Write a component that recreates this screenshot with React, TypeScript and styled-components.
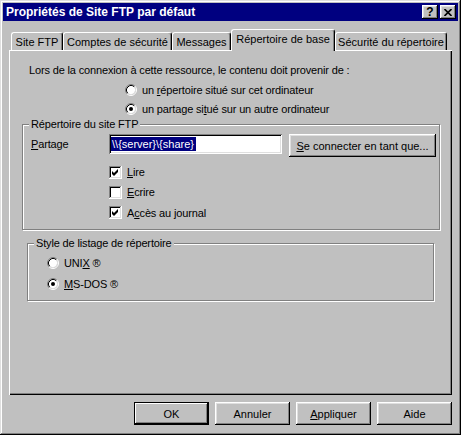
import React from 'react';
import styled, { createGlobalStyle } from 'styled-components';

const GlobalStyle = createGlobalStyle`
  html, body { margin: 0; padding: 0; background: #c0c0c0; }
  body {
    font-family: "Liberation Sans", Arial, sans-serif;
    font-size: 11px;
    color: #000;
  }
  * { box-sizing: border-box; }
`;

const Window = styled.div`
  width: 461px;
  height: 435px;
  padding: 3px;
  background: #c0c0c0;
  display: flex;
  flex-direction: column;
  box-shadow: inset -1px -1px #000, inset 1px 1px #dfdfdf,
    inset -2px -2px #808080, inset 2px 2px #fff;
`;

const TitleBar = styled.div`
  height: 18px;
  background: #000080;
  color: #fff;
  font-weight: bold;
  font-size: 12px;
  display: flex;
  align-items: center;
  justify-content: space-between;
  padding: 0 2px 0 3px;
`;

const TitleButtons = styled.div`
  display: flex;
  gap: 2px;
`;

const TitleButton = styled.div`
  width: 16px;
  height: 14px;
  background: #c0c0c0;
  color: #000;
  font-size: 12px;
  font-weight: bold;
  display: flex;
  align-items: center;
  justify-content: center;
  box-shadow: inset -1px -1px #000, inset 1px 1px #fff,
    inset -2px -2px #808080, inset 2px 2px #dfdfdf;
`;

const Body = styled.div`
  padding: 0 6px;
  display: flex;
  flex-direction: column;
`;

const TabStrip = styled.div`
  display: flex;
  align-items: flex-end;
  height: 21px;
  margin: 8px 0 0 2px;
  position: relative;
  z-index: 1;
`;

const Tab = styled.div<{ $active?: boolean; $w: number }>`
  width: ${(p) => p.$w}px;
  height: ${(p) => (p.$active ? 22 : 18)}px;
  margin-bottom: ${(p) => (p.$active ? -1 : 0)}px;
  padding-bottom: ${(p) => (p.$active ? 3 : 0)}px;
  border: 1px solid #fff;
  border-bottom: none;
  border-right-color: #000;
  border-radius: 3px 3px 0 0;
  box-shadow: inset -1px 0 #808080;
  background: #c0c0c0;
  display: flex;
  align-items: center;
  justify-content: center;
  white-space: nowrap;
`;

const Panel = styled.div`
  height: 345px;
  padding-top: 14px;
  display: flex;
  flex-direction: column;
  letter-spacing: -0.15px;
  box-shadow: inset 1px 1px #fff, inset -1px -1px #000, inset -2px -2px #808080;
`;

const Intro = styled.div`
  padding-left: 20px;
  line-height: 13px;
`;

const OptionList = styled.div<{ $indent: number; $top?: number }>`
  display: flex;
  flex-direction: column;
  margin-left: ${(p) => p.$indent}px;
  margin-top: ${(p) => p.$top ?? 0}px;
`;

const OptionRow = styled.label<{ $h: number }>`
  display: flex;
  align-items: center;
  gap: 5px;
  height: ${(p) => p.$h}px;
  white-space: nowrap;
`;

const Mn = styled.span`
  text-decoration: underline;
`;

const Group = styled.fieldset<{ $left: number; $right: number; $top: number; $bottom: number }>`
  margin: ${(p) => p.$top}px ${(p) => p.$right}px 0 ${(p) => p.$left}px;
  padding: 3px 0 ${(p) => p.$bottom}px 8px;
  border: 1px solid #808080;
  box-shadow: inset 1px 1px #fff, 1px 1px #fff;
  min-inline-size: auto;
`;

const Legend = styled.legend`
  padding: 0 2px;
  margin-left: -2px;
  line-height: 13px;
  background: #c0c0c0;
`;

const FieldRow = styled.div`
  display: flex;
  align-items: flex-start;
  height: 23px;
`;

const FieldLabel = styled.span`
  width: 78px;
  line-height: 20px;
`;

const TextField = styled.div`
  width: 173px;
  height: 20px;
  background: #fff;
  padding: 3px 3px 0 2px;
  line-height: 14px;
  box-shadow: inset 1px 1px #808080, inset -1px -1px #fff,
    inset 2px 2px #000, inset -2px -2px #dfdfdf;
  margin-right: 7px;
`;

const Selected = styled.span`
  background: #000080;
  color: #fff;
  display: inline-block;
  padding: 0 2px 0 1px;
  letter-spacing: 0;
`;

const Button = styled.button<{ $default?: boolean; $w?: number }>`
  width: ${(p) => p.$w ?? 75}px;
  height: 23px;
  padding: 0;
  border: none;
  background: #c0c0c0;
  font: inherit;
  color: #000;
  box-shadow: ${(p) =>
    p.$default
      ? 'inset 0 0 0 1px #000, inset -2px -2px #000, inset 2px 2px #fff, inset -3px -3px #808080'
      : 'inset -1px -1px #000, inset 1px 1px #fff, inset -2px -2px #808080, inset 2px 2px #dfdfdf'};
`;

const Footer = styled.div`
  display: flex;
  justify-content: flex-end;
  gap: 6px;
  margin-top: 7px;
`;

const Radio = ({ checked }: { checked?: boolean }) => (
  <svg width="12" height="12" viewBox="0 0 12 12">
    <circle cx="6" cy="6" r="4.2" fill="#fff" />
    <path d="M2.11 9.89A5.5 5.5 0 0 1 9.89 2.11" stroke="#808080" fill="none" />
    <path d="M9.89 2.11A5.5 5.5 0 0 1 2.11 9.89" stroke="#fff" fill="none" />
    <path d="M2.82 9.18A4.5 4.5 0 0 1 9.18 2.82" stroke="#000" fill="none" />
    <path d="M9.18 2.82A4.5 4.5 0 0 1 2.82 9.18" stroke="#dfdfdf" fill="none" />
    {checked && <circle cx="6" cy="6" r="2" fill="#000" />}
  </svg>
);

const Check = ({ checked }: { checked?: boolean }) => (
  <svg width="13" height="13" viewBox="0 0 13 13" shapeRendering="crispEdges">
    <rect x="0" y="0" width="13" height="13" fill="#fff" />
    <path d="M0.5 12.5V0.5H12.5" stroke="#808080" fill="none" />
    <path d="M1.5 11.5V1.5H11.5" stroke="#000" fill="none" />
    <path d="M0 12.5H12.5V0" stroke="#fff" fill="none" />
    <path d="M1 11.5H11.5V1" stroke="#dfdfdf" fill="none" />
    {checked && <path d="M3 5l2 2 4-4v3l-4 4-2-2z" fill="#000" shapeRendering="auto" />}
  </svg>
);

const tabs = [
  { label: 'Site FTP', w: 52 },
  { label: 'Comptes de sécurité', w: 109 },
  { label: 'Messages', w: 59 },
  { label: 'Répertoire de base', w: 104, active: true },
  { label: 'Sécurité du répertoire', w: 112 },
];

export default function App() {
  return (
    <>
      <GlobalStyle />
      <Window>
        <TitleBar>
          <span>Propriétés de Site FTP par défaut</span>
          <TitleButtons>
            <TitleButton>?</TitleButton>
            <TitleButton>
              <svg width="8" height="7" viewBox="0 0 8 7">
                <path d="M0.5 0l7 7M7.5 0l-7 7" stroke="#000" strokeWidth="1.6" />
              </svg>
            </TitleButton>
          </TitleButtons>
        </TitleBar>
        <Body>
          <TabStrip>
            {tabs.map((t) => (
              <Tab key={t.label} $w={t.w} $active={t.active}>
                {t.label}
              </Tab>
            ))}
          </TabStrip>
          <Panel>
            <Intro>Lors de la connexion à cette ressource, le contenu doit provenir de :</Intro>
            <OptionList $indent={116} $top={3}>
              <OptionRow $h={19}>
                <Radio />
                <span>un <Mn>r</Mn>épertoire situé sur cet ordinateur</span>
              </OptionRow>
              <OptionRow $h={19}>
                <Radio checked />
                <span>un partage si<Mn>t</Mn>ué sur un autre ordinateur</span>
              </OptionRow>
            </OptionList>
            <Group $left={13} $right={12} $top={0} $bottom={6}>
              <Legend>Répertoire du site FTP</Legend>
              <FieldRow>
                <FieldLabel><Mn>P</Mn>artage</FieldLabel>
                <TextField><Selected>\\{'{server}'}\{'{share}'}</Selected></TextField>
                <Button $w={147}><Mn>S</Mn>e connecter en tant que...</Button>
              </FieldRow>
              <OptionList $indent={78} $top={5}>
                <OptionRow $h={20}>
                  <Check checked />
                  <span><Mn>L</Mn>ire</span>
                </OptionRow>
                <OptionRow $h={20}>
                  <Check />
                  <span><Mn>E</Mn>crire</span>
                </OptionRow>
                <OptionRow $h={21}>
                  <Check checked />
                  <span>A<Mn>c</Mn>cès au journal</span>
                </OptionRow>
              </OptionList>
            </Group>
            <Group $left={18} $right={18} $top={7} $bottom={6}>
              <Legend>Style de listage de répertoire</Legend>
              <OptionList $indent={11} $top={-1}>
                <OptionRow $h={21}>
                  <Radio />
                  <span>UNI<Mn>X</Mn> ®</span>
                </OptionRow>
                <OptionRow $h={21}>
                  <Radio checked />
                  <span><Mn>M</Mn>S-DOS ®</span>
                </OptionRow>
              </OptionList>
            </Group>
          </Panel>
          <Footer>
            <Button $default>OK</Button>
            <Button>Annuler</Button>
            <Button><Mn>A</Mn>ppliquer</Button>
            <Button>Aide</Button>
          </Footer>
        </Body>
      </Window>
    </>
  );
}
